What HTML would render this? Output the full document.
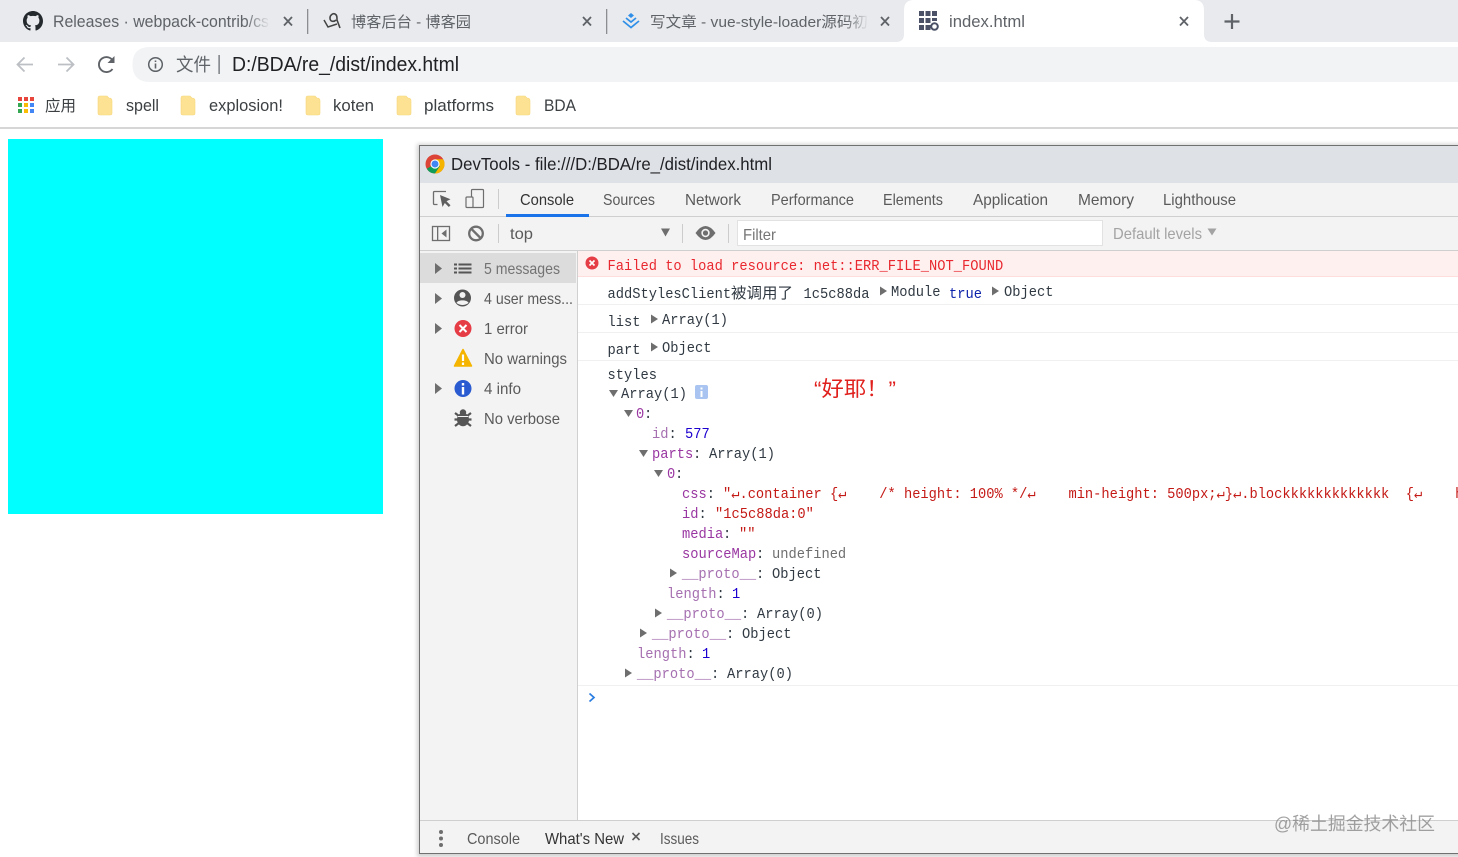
<!DOCTYPE html>
<html lang="zh">
<head>
<meta charset="utf-8">
<title>index.html</title>
<style>
html,body{margin:0;padding:0;background:#fff;width:1458px;height:857px;overflow:hidden}
svg{display:block;filter:blur(.3px)}
text{white-space:pre}
.s{font-family:"Liberation Sans","Noto Sans CJK SC",sans-serif;font-size:15px;fill:#5a5a5a}
.t{font-size:16.5px;fill:#5f6368}
.tc{font-size:15px;fill:#5f6368}
.b{font-size:17px;fill:#3c4043}
.bc{font-size:15.500px;fill:#3c4043}
.d{font-size:16px;fill:#5a5a5a}
.m{font-family:"Liberation Mono","Noto Sans CJK SC",monospace;font-size:15px;fill:#303942;transform-box:fill-box;transform-origin:0 0;transform:scaleX(.9167)}
.c{font-family:"Liberation Mono","Noto Sans CJK SC",monospace;font-size:15px;fill:#303942}
.p{fill:#881391;opacity:.85}
.l{fill:#a56fb0}
.n{fill:#1c00cf}
.r{fill:#c41a16}
.g{fill:#6e6e6e}
</style>
</head>
<body>
<svg width="1458" height="857" viewBox="0 0 1458 857" xmlns="http://www.w3.org/2000/svg">
<defs>
<linearGradient id="f1"><stop offset="0" stop-color="#e8eaed" stop-opacity="0"/><stop offset="1" stop-color="#e8eaed"/></linearGradient>
<filter id="sh" x="-5%" y="-5%" width="110%" height="110%"><feGaussianBlur stdDeviation="2"/></filter>
<clipPath id="dv"><rect x="420" y="146" width="1038" height="708"/></clipPath>
</defs>

<!-- tab strip -->
<rect width="1458" height="42" fill="#e8eaed"/>
<path d="M896 42q8 0 8-8V10Q904 0 914 0H1194q10 0 10 10V34q0 8 8 8V47H896Z" fill="#fff"/>
<rect x="0" y="42" width="1458" height="86" fill="#fff"/>

<!-- tab 1 -->
<path transform="translate(23 11) scale(1.25)" fill="#24292e" d="M8 0C3.58 0 0 3.58 0 8c0 3.54 2.29 6.53 5.47 7.59.4.07.55-.17.55-.38 0-.19-.01-.82-.01-1.49-2.01.37-2.53-.49-2.69-.94-.09-.23-.48-.94-.82-1.13-.28-.15-.68-.52-.01-.53.63-.01 1.08.58 1.23.82.72 1.21 1.87.87 2.33.66.07-.52.28-.87.51-1.07-1.78-.2-3.64-.89-3.64-3.95 0-.87.31-1.59.82-2.15-.08-.2-.36-1.02.08-2.12 0 0 .67-.21 2.2.82.64-.18 1.32-.27 2-.27.68 0 1.36.09 2 .27 1.53-1.04 2.2-.82 2.2-.82.44 1.1.16 1.92.08 2.12.51.56.82 1.27.82 2.15 0 3.07-1.87 3.75-3.65 3.95.29.25.54.73.54 1.48 0 1.07-.01 1.93-.01 2.2 0 .21.15.46.55.38A8.013 8.013 0 0016 8c0-4.42-3.58-8-8-8z"/>
<text class="s t" x="53" y="27" textLength="216" lengthAdjust="spacingAndGlyphs">Releases · webpack-contrib/cs</text>
<rect x="245" y="10" width="25" height="24" fill="url(#f1)"/>
<path d="M284 17l8 8.500m0-8.500l-8 8.500" stroke="#5f6368" stroke-width="1.800" fill="none"/>
<rect x="307" y="9" width="1.300" height="25" fill="#8a8d91"/>

<!-- tab 2 -->
<path d="M324 20l4 7 9-3" stroke="#444" stroke-width="1.500" fill="none"/>
<path d="M336 20c-2 2-6 2-6-2 0-3 3-5 5-4 2 1 2 3 2 6l3 8" stroke="#444" stroke-width="1.600" fill="none"/>
<text class="s tc" x="351" y="27" textLength="120" lengthAdjust="spacingAndGlyphs">博客后台 - 博客园</text>
<path d="M583 17l8 8.500m0-8.500l-8 8.500" stroke="#5f6368" stroke-width="1.800" fill="none"/>
<rect x="606" y="9" width="1.300" height="25" fill="#8a8d91"/>

<!-- tab 3 -->
<path d="M631 13l3 2.500-3 2.500-3-2.500z" fill="#2f8fe8"/>
<path d="M626 18l5 4 5-4M623 21l8 6.500 8-6.500" stroke="#2f8fe8" stroke-width="1.700" fill="none"/>
<text class="s tc" x="650" y="27" textLength="218" lengthAdjust="spacingAndGlyphs">写文章 - vue-style-loader源码初</text>
<rect x="845" y="10" width="24" height="24" fill="url(#f1)"/>
<path d="M881 17l8 8.500m0-8.500l-8 8.500" stroke="#5f6368" stroke-width="1.800" fill="none"/>

<!-- tab 4 -->
<g fill="#4b5166">
<rect x="919" y="11" width="5" height="5"/><rect x="925.500" y="11" width="5" height="5"/><rect x="932" y="11" width="5" height="5"/>
<rect x="919" y="18" width="5" height="5"/><rect x="925.500" y="18" width="5" height="5"/><rect x="932" y="18" width="5" height="3"/>
<rect x="919" y="25" width="5" height="5"/><rect x="925.500" y="25" width="5" height="5"/>
</g>
<circle cx="934.500" cy="26.500" r="3.300" fill="none" stroke="#4b5166" stroke-width="2"/>
<text class="s t" x="949" y="27" textLength="76" lengthAdjust="spacingAndGlyphs">index.html</text>
<path d="M1180 17l8 8.500m0-8.500l-8 8.500" stroke="#5f6368" stroke-width="1.800" fill="none"/>
<path d="M1224.500 21.500h15M1232 14v15" stroke="#5f6368" stroke-width="2.200" fill="none"/>

<!-- toolbar -->
<path d="M150 47H1458V82H150q-17.500 0-17.500-17.500T150 47Z" fill="#f1f3f4"/>
<path d="M33 64.500H18M24.500 57.500l-7 7 7 7" stroke="#bcc0c4" stroke-width="1.800" fill="none"/>
<path d="M58 64.500h15M66.500 57.500l7 7-7 7" stroke="#bcc0c4" stroke-width="1.800" fill="none"/>
<path d="M112.500 69a7.500 7.500 0 1 1 .8-7.500" stroke="#5f6368" stroke-width="1.900" fill="none"/>
<path d="M114.500 56v7h-7z" fill="#5f6368"/>
<circle cx="155.500" cy="64.500" r="6.800" fill="none" stroke="#5f6368" stroke-width="1.500"/>
<path d="M155.500 60.500v1.500M155.500 63.500v5" stroke="#5f6368" stroke-width="1.600"/>
<text class="s" x="176" y="71" textLength="35" lengthAdjust="spacingAndGlyphs" style="font-size:18px;fill:#5f6368">文件</text>
<rect x="218.500" y="55" width="1.200" height="19" fill="#5f6368"/>
<text class="s" x="232" y="71" textLength="227" lengthAdjust="spacingAndGlyphs" style="font-size:20.500px;fill:#202124">D:/BDA/re_/dist/index.html</text>

<!-- bookmarks -->
<g>
<rect x="18" y="97" width="4" height="4" fill="#e8453c"/><rect x="24" y="97" width="4" height="4" fill="#e8453c"/><rect x="30" y="97" width="4" height="4" fill="#e8453c"/>
<rect x="18" y="103" width="4" height="4" fill="#34a853"/><rect x="24" y="103" width="4" height="4" fill="#fbbc05"/><rect x="30" y="103" width="4" height="4" fill="#4285f4"/>
<rect x="18" y="109" width="4" height="4" fill="#34a853"/><rect x="24" y="109" width="4" height="4" fill="#fbbc05"/><rect x="30" y="109" width="4" height="4" fill="#4285f4"/>
</g>
<text class="s bc" x="45" y="111" textLength="31" lengthAdjust="spacingAndGlyphs">应用</text>
<g fill="#fde293" stroke="#f6d77f" stroke-width=".6">
<path d="M98 98q0-2 2-2h7l2 2q3 0 3 2.500V113q0 2-2 2h-10q-2 0-2-2z"/>
<path d="M181 98q0-2 2-2h7l2 2q3 0 3 2.500V113q0 2-2 2h-10q-2 0-2-2z"/>
<path d="M306 98q0-2 2-2h7l2 2q3 0 3 2.500V113q0 2-2 2h-10q-2 0-2-2z"/>
<path d="M397 98q0-2 2-2h7l2 2q3 0 3 2.500V113q0 2-2 2h-10q-2 0-2-2z"/>
<path d="M516 98q0-2 2-2h7l2 2q3 0 3 2.500V113q0 2-2 2h-10q-2 0-2-2z"/>
</g>
<text class="s b" x="126" y="111" textLength="33" lengthAdjust="spacingAndGlyphs">spell</text>
<text class="s b" x="209" y="111" textLength="74" lengthAdjust="spacingAndGlyphs">explosion!</text>
<text class="s b" x="333" y="111" textLength="41" lengthAdjust="spacingAndGlyphs">koten</text>
<text class="s b" x="424" y="111" textLength="70" lengthAdjust="spacingAndGlyphs">platforms</text>
<text class="s b" x="544" y="111" textLength="32" lengthAdjust="spacingAndGlyphs">BDA</text>
<rect x="0" y="127" width="1458" height="2" fill="#d6d6d6"/>

<!-- page -->
<rect x="8" y="139" width="375" height="375" fill="#0ff"/>

<!-- devtools window -->
<rect x="417" y="144" width="1045" height="713" fill="#000" opacity=".18" filter="url(#sh)"/>
<rect x="419.500" y="145.500" width="1040" height="708" fill="#fff" stroke="#707070"/>
<g clip-path="url(#dv)">
<rect x="420" y="146" width="1038" height="37" fill="#dee1e6"/>
<circle cx="435" cy="164" r="9.500" fill="#db4437"/>
<path d="M435 164L426.800 168.800A9.500 9.500 0 0 0 435 173.500L440 166Z" fill="#0f9d58"/>
<path d="M435 164L440 166 435 173.500A9.500 9.500 0 0 0 443.200 159.200L435 159.200Z" fill="#f4b400"/>
<circle cx="435" cy="164" r="4.600" fill="#fff"/><circle cx="435" cy="164" r="3.500" fill="#4285f4"/>
<text class="s" x="451" y="170" textLength="321" lengthAdjust="spacingAndGlyphs" style="font-size:17.500px;fill:#202124">DevTools - file:///D:/BDA/re_/dist/index.html</text>

<!-- main tabs -->
<rect x="420" y="183" width="1038" height="67" fill="#f3f3f3"/>
<rect x="420" y="216" width="1038" height="1" fill="#cfcfcf"/>
<path d="M446 191.500h-11.500q-1 0-1 1v11q0 1 1 1h3" stroke="#6e6e6e" stroke-width="1.300" fill="none"/>
<path d="M440 195l2.500 12 2.300-4 4 4 1.700-1.700-4-4 4-2z" fill="#5f5f5f"/>
<rect x="471.500" y="189.500" width="12" height="18" rx="1" fill="none" stroke="#6e6e6e" stroke-width="1.200"/>
<rect x="466" y="197" width="7" height="10.500" rx="1" fill="#f3f3f3" stroke="#6e6e6e" stroke-width="1.200"/>
<rect x="498" y="189" width="1" height="20" fill="#ccc"/>
<text class="s d" x="520" y="205" textLength="54" lengthAdjust="spacingAndGlyphs" style="fill:#333">Console</text>
<text class="s d" x="603" y="205" textLength="52" lengthAdjust="spacingAndGlyphs">Sources</text>
<text class="s d" x="685" y="205" textLength="56" lengthAdjust="spacingAndGlyphs">Network</text>
<text class="s d" x="771" y="205" textLength="83" lengthAdjust="spacingAndGlyphs">Performance</text>
<text class="s d" x="883" y="205" textLength="60" lengthAdjust="spacingAndGlyphs">Elements</text>
<text class="s d" x="973" y="205" textLength="75" lengthAdjust="spacingAndGlyphs">Application</text>
<text class="s d" x="1078" y="205" textLength="56" lengthAdjust="spacingAndGlyphs">Memory</text>
<text class="s d" x="1163" y="205" textLength="73" lengthAdjust="spacingAndGlyphs">Lighthouse</text>
<rect x="506" y="214" width="83" height="3" fill="#1a73e8"/>

<!-- console toolbar -->
<rect x="432.500" y="226.500" width="17" height="14" fill="none" stroke="#6e6e6e" stroke-width="1.300"/>
<rect x="437" y="226.500" width="1.300" height="14" fill="#6e6e6e"/>
<path d="M446.500 229.500v8l-5-4z" fill="#6e6e6e"/>
<circle cx="476" cy="233.500" r="6.800" fill="none" stroke="#6e6e6e" stroke-width="2.300"/>
<path d="M471.500 229l9 9" stroke="#6e6e6e" stroke-width="2.300"/>
<rect x="498" y="224" width="1" height="19" fill="#ccc"/>
<text class="s d" x="510" y="239" textLength="23" lengthAdjust="spacingAndGlyphs">top</text>
<path d="M661 228.500h9l-4.500 8z" fill="#6e6e6e"/>
<rect x="682" y="224" width="1" height="19" fill="#ccc"/>
<path d="M695.500 233q10-14 20 0-10 14-20 0Z" fill="#6e6e6e"/>
<circle cx="705.500" cy="233" r="4.200" fill="#f3f3f3"/><circle cx="705.500" cy="233" r="2.600" fill="#6e6e6e"/>
<rect x="728" y="224" width="1" height="19" fill="#ccc"/>
<rect x="737.500" y="220.500" width="365" height="25" fill="#fff" stroke="#e2e2e2"/>
<text class="s d" x="743" y="240" textLength="33" lengthAdjust="spacingAndGlyphs" style="fill:#757575">Filter</text>
<text class="s d" x="1113" y="239" textLength="89" lengthAdjust="spacingAndGlyphs" style="fill:#a3a3a3">Default levels</text>
<path d="M1207.500 228.500h9l-4.500 7z" fill="#a3a3a3"/>
<rect x="420" y="250" width="1038" height="1" fill="#cfcfcf"/>

<!-- sidebar -->
<rect x="420" y="251" width="157" height="569" fill="#f3f3f3"/>
<rect x="577" y="251" width="1" height="569" fill="#d0d0d0"/>
<rect x="420" y="253" width="156" height="30" fill="#dcdcdc"/>
<g fill="#6e6e6e">
<path d="M435 263v11l7-5.500z"/><path d="M435 293v11l7-5.500z"/><path d="M435 323v11l7-5.500z"/><path d="M435 383v11l7-5.500z"/>
</g>
<path d="M454 263.500h3v2h-3zM454 267.500h3v2h-3zM454 271.500h3v2h-3zM458.500 263.500h13v2h-13zM458.500 267.500h13v2h-13zM458.500 271.500h13v2h-13z" fill="#555"/>
<circle cx="462.500" cy="298" r="8.500" fill="#555"/>
<circle cx="462.500" cy="295" r="3" fill="#f3f3f3"/>
<path d="M456.500 303c1-3.500 11-3.500 12 0q-6 4-12 0Z" fill="#f3f3f3"/>
<circle cx="463" cy="328.500" r="8.500" fill="#e53c45"/>
<path d="M459.500 325l7 7m0-7l-7 7" stroke="#fff" stroke-width="2"/>
<path d="M463 349.500l8.500 16.500h-17z" fill="#f4b400" stroke="#f4b400" stroke-linejoin="round" stroke-width="1.500"/>
<path d="M463 354.500v6.500M463 362.500v2.500" stroke="#fff" stroke-width="2.200"/>
<circle cx="463" cy="388.500" r="8.500" fill="#2a5bd0"/>
<path d="M463 383v2.500M463 387v7.500" stroke="#fff" stroke-width="2.400"/>
<ellipse cx="463" cy="419.500" rx="6" ry="6.800" fill="#555"/>
<path d="M455 413l4 3M471 413l-4 3M454.500 419.500h5M471.500 419.500h-5M455 426l4-3M471 426l-4-3" stroke="#555" stroke-width="2.200"/>
<circle cx="463" cy="412.500" r="3.200" fill="#555"/>
<path d="M458 416.500h10" stroke="#f3f3f3" stroke-width="1"/>
<text class="s d" x="484" y="274" textLength="76" lengthAdjust="spacingAndGlyphs" style="fill:#737373">5 messages</text>
<text class="s d" x="484" y="304" textLength="89" lengthAdjust="spacingAndGlyphs">4 user mess...</text>
<text class="s d" x="484" y="334" textLength="44" lengthAdjust="spacingAndGlyphs">1 error</text>
<text class="s d" x="484" y="364" textLength="83" lengthAdjust="spacingAndGlyphs">No warnings</text>
<text class="s d" x="484" y="394" textLength="37" lengthAdjust="spacingAndGlyphs">4 info</text>
<text class="s d" x="484" y="424" textLength="76" lengthAdjust="spacingAndGlyphs">No verbose</text>

<!-- console messages -->
<rect x="578" y="251" width="880" height="26" fill="#fff0f0"/>
<rect x="578" y="276" width="880" height="1" fill="#fdd"/>
<circle cx="592" cy="263" r="6.500" fill="#e53c45"/>
<path d="M589.500 260.500l5 5m0-5l-5 5" stroke="#fff" stroke-width="1.700"/>
<text class="m" x="607.500" y="270" style="fill:#e8282e">Failed to load resource: net::ERR_FILE_NOT_FOUND</text>

<text class="m" x="607.500" y="298">addStylesClient</text>
<text class="c" x="731" y="298" textLength="62" lengthAdjust="spacingAndGlyphs">被调用了</text>
<text class="m" x="803.500" y="298">1c5c88da</text>
<path d="M880 286.500v9l7-4.500z" fill="#6e6e6e"/>
<text class="m" x="891" y="296">Module</text>
<text class="m n" x="949" y="298" style="fill:#0d22aa">true</text>
<path d="M992 286.500v9l7-4.500z" fill="#6e6e6e"/>
<text class="m" x="1004" y="296">Object</text>
<rect x="578" y="304" width="880" height="1" fill="#f0f0f0"/>

<text class="m" x="607.500" y="326">list</text>
<path d="M651 314.500v9l7-4.500z" fill="#6e6e6e"/>
<text class="m" x="662" y="324">Array(1)</text>
<rect x="578" y="332" width="880" height="1" fill="#f0f0f0"/>

<text class="m" x="607.500" y="354">part</text>
<path d="M651 342.500v9l7-4.500z" fill="#6e6e6e"/>
<text class="m" x="662" y="352">Object</text>
<rect x="578" y="360" width="880" height="1" fill="#f0f0f0"/>

<text class="m" x="607.500" y="379">styles</text>
<path d="M609 390h9l-4.500 7z" fill="#6e6e6e"/>
<text class="m" x="621" y="398">Array(1)</text>
<rect x="695" y="385" width="13" height="14" rx="2" fill="#a9c4f0"/>
<path d="M701.500 387.500v2M701.500 391v6" stroke="#fff" stroke-width="2"/>
<text class="s" x="814" y="396" textLength="82" lengthAdjust="spacingAndGlyphs" style="font-size:21px;fill:#e0201c">“好耶！”</text>

<path d="M624 410h9l-4.500 7z" fill="#6e6e6e"/>
<text class="m p" x="636" y="418">0</text><text class="m" x="644" y="418">:</text>
<text class="m l" x="652" y="438">id</text><text class="m" x="668.500" y="438">:</text><text class="m n" x="685" y="438">577</text>
<path d="M639 450h9l-4.500 7z" fill="#6e6e6e"/>
<text class="m p" x="652" y="458">parts</text><text class="m" x="693" y="458">:</text><text class="m" x="709" y="458">Array(1)</text>
<path d="M654 470h9l-4.500 7z" fill="#6e6e6e"/>
<text class="m p" x="667" y="478">0</text><text class="m" x="675" y="478">:</text>
<text class="m p" x="682" y="498">css</text><text class="m" x="706.750" y="498">:</text>
<text class="m r" x="723" y="498" style="transform:scaleX(.9145)">"↵.container {↵    /* height: 100% */↵    min-height: 500px;↵}↵.blockkkkkkkkkkkkk  {↵    h</text>
<text class="m p" x="682" y="518">id</text><text class="m" x="698.500" y="518">:</text><text class="m r" x="715" y="518">"1c5c88da:0"</text>
<text class="m p" x="682" y="538">media</text><text class="m" x="723" y="538">:</text><text class="m r" x="739" y="538">""</text>
<text class="m p" x="682" y="558">sourceMap</text><text class="m" x="756" y="558">:</text><text class="m g" x="772" y="558">undefined</text>
<path d="M670 568.500v9l7-4.500z" fill="#6e6e6e"/>
<text class="m l" x="682" y="578">__proto__</text><text class="m" x="756" y="578">:</text><text class="m" x="772" y="578">Object</text>
<text class="m l" x="667" y="598">length</text><text class="m" x="716.500" y="598">:</text><text class="m n" x="732" y="598">1</text>
<path d="M655 608.500v9l7-4.500z" fill="#6e6e6e"/>
<text class="m l" x="667" y="618">__proto__</text><text class="m" x="741" y="618">:</text><text class="m" x="757" y="618">Array(0)</text>
<path d="M640 628.500v9l7-4.500z" fill="#6e6e6e"/>
<text class="m l" x="652" y="638">__proto__</text><text class="m" x="726" y="638">:</text><text class="m" x="742" y="638">Object</text>
<text class="m l" x="637" y="658">length</text><text class="m" x="686.500" y="658">:</text><text class="m n" x="702" y="658">1</text>
<path d="M625 668.500v9l7-4.500z" fill="#6e6e6e"/>
<text class="m l" x="637" y="678">__proto__</text><text class="m" x="711" y="678">:</text><text class="m" x="727" y="678">Array(0)</text>
<rect x="578" y="685" width="880" height="1" fill="#f0f0f0"/>
<path d="M589.500 693.500l4.500 4-4.500 4" stroke="#2a7de1" stroke-width="1.700" fill="none"/>

<!-- drawer -->
<rect x="420" y="820" width="1038" height="1" fill="#cfcfcf"/>
<rect x="420" y="821" width="1038" height="32" fill="#f3f3f3"/>
<circle cx="441" cy="832" r="2" fill="#6e6e6e"/><circle cx="441" cy="838.500" r="2" fill="#6e6e6e"/><circle cx="441" cy="845" r="2" fill="#6e6e6e"/>
<text class="s d" x="467" y="844" textLength="53" lengthAdjust="spacingAndGlyphs">Console</text>
<text class="s d" x="545" y="844" textLength="79" lengthAdjust="spacingAndGlyphs" style="fill:#333">What's New</text>
<path d="M632.500 833l7 7m0-7l-7 7" stroke="#5a5a5a" stroke-width="1.600"/>
<text class="s d" x="660" y="844" textLength="39" lengthAdjust="spacingAndGlyphs">Issues</text>
</g>
<text class="s" x="1274" y="830" textLength="161" lengthAdjust="spacingAndGlyphs" style="font-size:18px;fill:#8a8a8a;opacity:.8">@稀土掘金技术社区</text>
</svg>
</body>
</html>
